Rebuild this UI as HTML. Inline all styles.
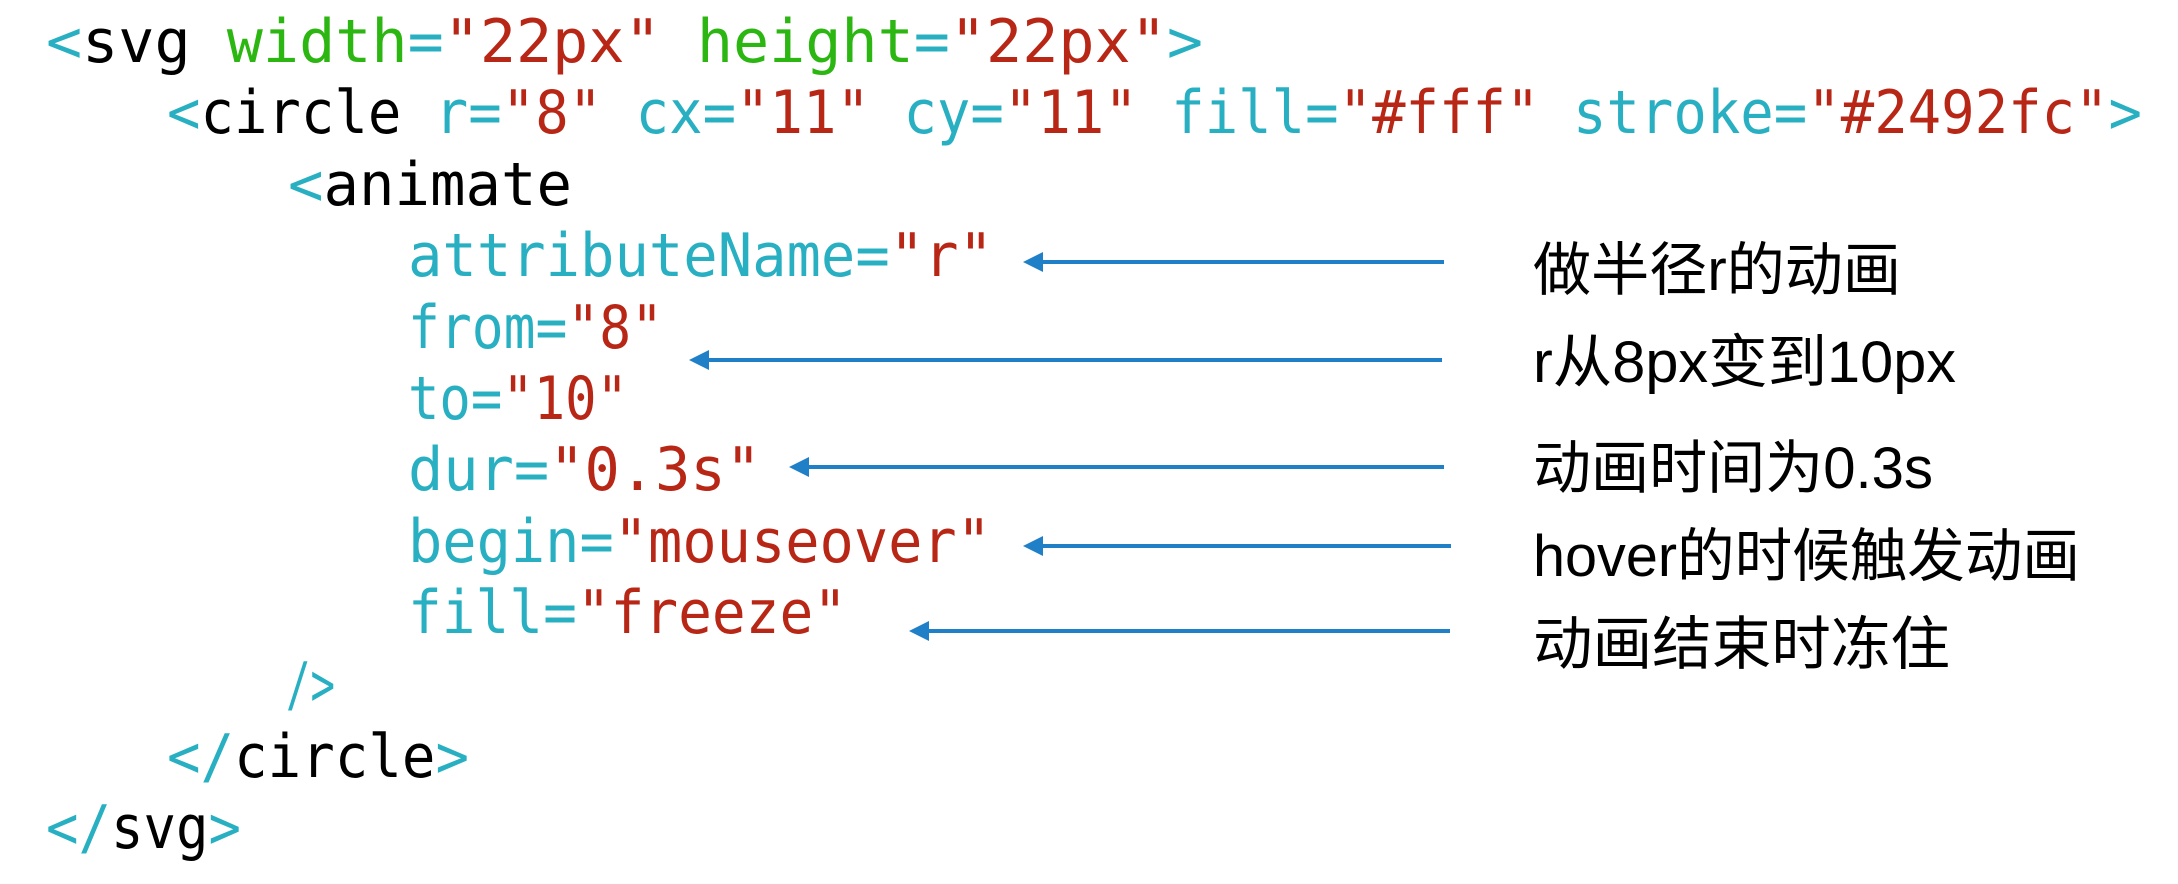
<!DOCTYPE html>
<html><head><meta charset="utf-8"><style>
html,body{margin:0;padding:0;background:#fff;width:2178px;height:884px;overflow:hidden}
svg{display:block}
.c{font-family:"DejaVu Sans Mono","Liberation Mono",monospace;font-size:60px}
.t{fill:#28b0c2}.r{fill:#b82616}.g{fill:#2cb612}.k{fill:#000}
.z{font-family:"Liberation Sans","Noto Sans CJK SC",sans-serif;font-size:58px;fill:#000}
</style></head><body>
<svg width="2178" height="884" viewBox="0 0 2178 884">
<g class="c">
<text x="46" y="62" textLength="1157" lengthAdjust="spacingAndGlyphs"><tspan class="t">&lt;</tspan><tspan class="k">svg </tspan><tspan class="g">width</tspan><tspan class="t">=</tspan><tspan class="r">"22px"</tspan> <tspan class="g">height</tspan><tspan class="t">=</tspan><tspan class="r">"22px"</tspan><tspan class="t">&gt;</tspan></text>
<text x="167" y="133" textLength="1975" lengthAdjust="spacingAndGlyphs"><tspan class="t">&lt;</tspan><tspan class="k">circle </tspan><tspan class="t">r=</tspan><tspan class="r">"8"</tspan> <tspan class="t">cx=</tspan><tspan class="r">"11"</tspan> <tspan class="t">cy=</tspan><tspan class="r">"11"</tspan> <tspan class="t">fill=</tspan><tspan class="r">"#fff"</tspan> <tspan class="t">stroke=</tspan><tspan class="r">"#2492fc"</tspan><tspan class="t">&gt;</tspan></text>
<text x="288" y="205" textLength="284" lengthAdjust="spacingAndGlyphs"><tspan class="t">&lt;</tspan><tspan class="k">animate</tspan></text>
<text x="408" y="276" textLength="585" lengthAdjust="spacingAndGlyphs"><tspan class="t">attributeName=</tspan><tspan class="r">"r"</tspan></text>
<text x="408" y="348" textLength="255" lengthAdjust="spacingAndGlyphs"><tspan class="t">from=</tspan><tspan class="r">"8"</tspan></text>
<text x="408" y="419" textLength="220" lengthAdjust="spacingAndGlyphs"><tspan class="t">to=</tspan><tspan class="r">"10"</tspan></text>
<text x="408" y="490" textLength="353" lengthAdjust="spacingAndGlyphs"><tspan class="t">dur=</tspan><tspan class="r">"0.3s"</tspan></text>
<text x="408" y="562" textLength="583" lengthAdjust="spacingAndGlyphs"><tspan class="t">begin=</tspan><tspan class="r">"mouseover"</tspan></text>
<text x="408" y="633" textLength="439" lengthAdjust="spacingAndGlyphs"><tspan class="t">fill=</tspan><tspan class="r">"freeze"</tspan></text>
<text x="286" y="705" textLength="49" lengthAdjust="spacingAndGlyphs" class="t">/&gt;</text>
<text x="167" y="777" textLength="302" lengthAdjust="spacingAndGlyphs"><tspan class="t">&lt;/</tspan><tspan class="k">circle</tspan><tspan class="t">&gt;</tspan></text>
<text x="46" y="848" textLength="195" lengthAdjust="spacingAndGlyphs"><tspan class="t">&lt;/</tspan><tspan class="k">svg</tspan><tspan class="t">&gt;</tspan></text>
</g>
<g stroke="#1f7fc7" stroke-width="4">
<line x1="1040" y1="262" x2="1444" y2="262"/>
<line x1="706" y1="360" x2="1442" y2="360"/>
<line x1="806" y1="467" x2="1444" y2="467"/>
<line x1="1040" y1="546" x2="1451" y2="546"/>
<line x1="926" y1="631" x2="1450" y2="631"/>
</g>
<g fill="#1f7fc7">
<polygon points="1023,262 1043,252 1043,272"/>
<polygon points="689,360 709,350 709,370"/>
<polygon points="789,467 809,457 809,477"/>
<polygon points="1023,546 1043,536 1043,556"/>
<polygon points="909,631 929,621 929,641"/>
</g>
<g class="z">
<text x="1533" y="290" textLength="368" lengthAdjust="spacingAndGlyphs">做半径r的动画</text>
<text x="1533" y="382" textLength="423" lengthAdjust="spacingAndGlyphs">r从8px变到10px</text>
<text x="1533" y="488" textLength="400" lengthAdjust="spacingAndGlyphs">动画时间为0.3s</text>
<text x="1533" y="576" textLength="547" lengthAdjust="spacingAndGlyphs">hover的时候触发动画</text>
<text x="1533" y="664" textLength="417" lengthAdjust="spacingAndGlyphs">动画结束时冻住</text>
</g>
</svg>
</body></html>
